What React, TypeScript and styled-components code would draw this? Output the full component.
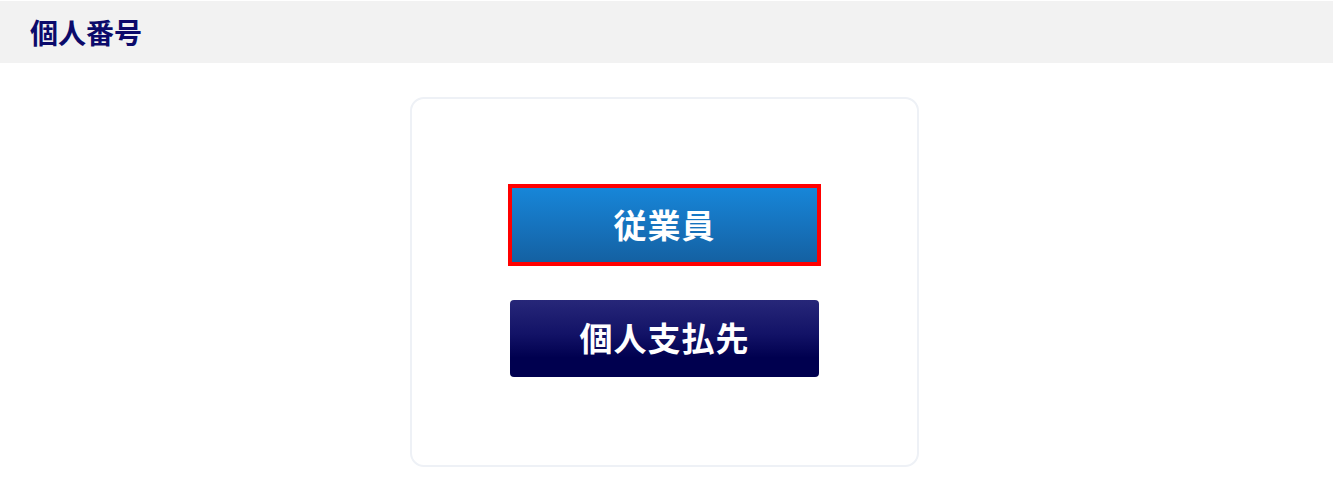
import styled, { createGlobalStyle } from "styled-components";

const GlobalStyle = createGlobalStyle`
  html, body {
    margin: 0;
    padding: 0;
    background: #ffffff;
    font-family: "Noto Sans CJK JP", "Noto Sans", sans-serif;
  }
`;

const Page = styled.div`
  padding-top: 1px;
`;

const Header = styled.header`
  height: 62px;
  background: #f2f2f2;
  display: flex;
  align-items: center;
  padding-left: 30px;
`;

const Title = styled.h1`
  margin: 0;
  font-size: 28px;
  font-weight: 700;
  color: #0b0a6b;
  line-height: 1;
`;

const Main = styled.main`
  display: flex;
  justify-content: center;
  padding: 34px 4px 0 0;
`;

const Card = styled.section`
  box-sizing: border-box;
  width: 509px;
  height: 370px;
  border: 2px solid #eef1f6;
  border-radius: 14px;
  background: #ffffff;
  display: flex;
  flex-direction: column;
  align-items: center;
  padding-top: 85px;
  gap: 34px;
`;

const MenuButton = styled.button<{ $variant: "primary" | "dark"; $selected?: boolean }>`
  display: flex;
  align-items: center;
  justify-content: center;
  box-sizing: border-box;
  width: ${(p) => (p.$selected ? "313px" : "309px")};
  height: ${(p) => (p.$selected ? "82px" : "77px")};
  margin: 0;
  padding: 0 0 2px;
  border: ${(p) => (p.$selected ? "4px solid #ff0000" : "none")};
  border-radius: ${(p) => (p.$selected ? "0" : "4px")};
  background: ${(p) =>
    p.$variant === "primary"
      ? "linear-gradient(to bottom, #1786d8 0%, #1673be 50%, #1461a2 100%)"
      : "linear-gradient(to bottom, #272779 0%, #121266 45%, #00004f 75%, #00004f 100%)"};
  color: #ffffff;
  font-family: "Noto Sans CJK JP", "Noto Sans", sans-serif;
  font-size: 33px;
  font-weight: 700;
  letter-spacing: 1px;
  line-height: 1;
  cursor: pointer;
`;

export default function App() {
  return (
    <>
      <GlobalStyle />
      <Page>
        <Header>
          <Title>個人番号</Title>
        </Header>
        <Main>
          <Card>
            <MenuButton $variant="primary" $selected>
              従業員
            </MenuButton>
            <MenuButton $variant="dark">個人支払先</MenuButton>
          </Card>
        </Main>
      </Page>
    </>
  );
}
